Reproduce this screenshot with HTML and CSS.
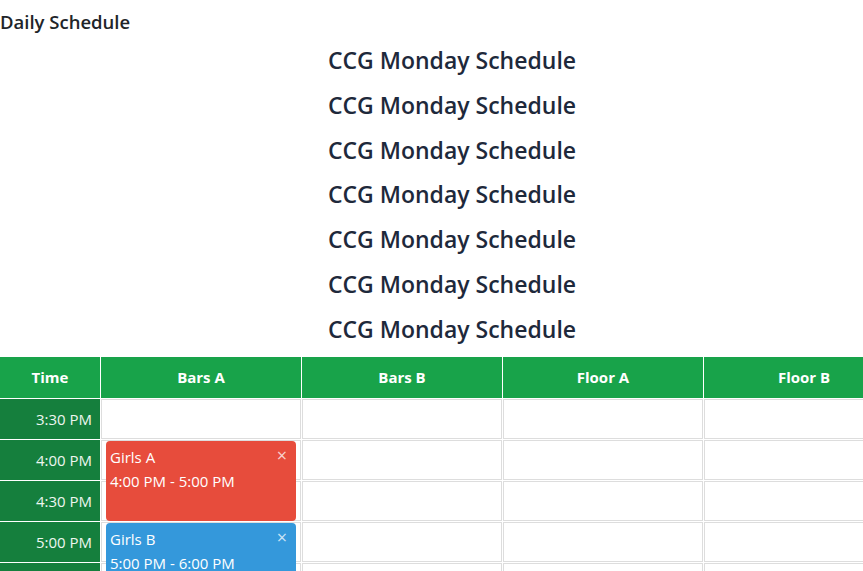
FILE: index.html
```html
<!DOCTYPE html>
<html lang="en">
<head>
<meta charset="utf-8">
<title>Daily Schedule</title>
<link rel="stylesheet" href="styles.css">
</head>
<body>
<div class="page">
  <div class="app-title">Daily Schedule</div>
  <h2 class="heading">CCG Monday Schedule</h2>
  <h2 class="heading">CCG Monday Schedule</h2>
  <h2 class="heading">CCG Monday Schedule</h2>
  <h2 class="heading">CCG Monday Schedule</h2>
  <h2 class="heading">CCG Monday Schedule</h2>
  <h2 class="heading">CCG Monday Schedule</h2>
  <h2 class="heading">CCG Monday Schedule</h2>
  <table class="schedule">
    <colgroup>
      <col class="col-time">
      <col class="col-area">
      <col class="col-area">
      <col class="col-area">
      <col class="col-area">
    </colgroup>
    <thead>
      <tr>
        <th>Time</th>
        <th>Bars A</th>
        <th>Bars B</th>
        <th>Floor A</th>
        <th>Floor B</th>
      </tr>
    </thead>
    <tbody>
      <tr>
        <td class="time">3:30 PM</td>
        <td class="slot"></td><td class="slot"></td><td class="slot"></td><td class="slot"></td>
      </tr>
      <tr>
        <td class="time">4:00 PM</td>
        <td class="slot">
          <div class="event event-red" style="height: 80px">
            <div class="event-name">Girls A</div>
            <div class="event-time">4:00 PM - 5:00 PM</div>
            <span class="event-close">&times;</span>
          </div>
        </td>
        <td class="slot"></td><td class="slot"></td><td class="slot"></td>
      </tr>
      <tr>
        <td class="time">4:30 PM</td>
        <td class="slot"></td><td class="slot"></td><td class="slot"></td><td class="slot"></td>
      </tr>
      <tr>
        <td class="time">5:00 PM</td>
        <td class="slot">
          <div class="event event-blue" style="height: 80px">
            <div class="event-name">Girls B</div>
            <div class="event-time">5:00 PM - 6:00 PM</div>
            <span class="event-close">&times;</span>
          </div>
        </td>
        <td class="slot"></td><td class="slot"></td><td class="slot"></td>
      </tr>
      <tr>
        <td class="time">5:30 PM</td>
        <td class="slot"></td><td class="slot"></td><td class="slot"></td><td class="slot"></td>
      </tr>
      <tr>
        <td class="time">6:00 PM</td>
        <td class="slot"></td><td class="slot"></td><td class="slot"></td><td class="slot"></td>
      </tr>
    </tbody>
  </table>
</div>
</body>
</html>
```
FILE: styles.css
```css
html, body {
  margin: 0;
  padding: 0;
  overflow: hidden;
  background: #ffffff;
}

body {
  font-family: "Open Sans", "Noto Sans", sans-serif;
  color: #212529;
}

.page {
  width: max-content;
}

.app-title {
  font-size: 18.5px;
  font-weight: 600;
  line-height: 24px;
  margin: 10px 0 8px 0;
  color: #212529;
}

.heading {
  text-align: center;
  font-size: 23px;
  font-weight: 600;
  line-height: 36px;
  margin: 0 0 8.83px 0;
  color: #1e293b;
}

.schedule {
  border-collapse: separate;
  border-spacing: 1px;
  margin: 0 -1px;
  table-layout: fixed;
  width: 904px;
}

.col-time {
  width: 100px;
}

.col-area {
  width: 200px;
}

.schedule th {
  box-sizing: border-box;
  height: 41px;
  background: #18a34a;
  color: #ffffff;
  font-size: 15px;
  font-weight: 700;
  text-align: center;
  padding: 0;
}

.schedule td {
  box-sizing: border-box;
  height: 40px;
  padding: 0;
  font-size: 15px;
}

.time {
  background: #157f3d;
  color: #eef6f0;
  text-align: right;
  padding-right: 8px !important;
  vertical-align: middle;
}

.slot {
  border: 1px solid #dddddd;
  position: relative;
  vertical-align: top;
}

.event {
  position: absolute;
  top: 0;
  left: 4px;
  right: 4px;
  box-sizing: border-box;
  border-radius: 4px;
  padding: 4px 4px;
  color: #ffffff;
  font-size: 15px;
  line-height: 24px;
  z-index: 2;
}

.event-red {
  background: #e74c3c;
}

.event-blue {
  background: #3498db;
}

.event-close {
  position: absolute;
  top: 2px;
  right: 9px;
  font-size: 18px;
  line-height: 24px;
  color: rgba(255, 255, 255, 0.75);
}
```
